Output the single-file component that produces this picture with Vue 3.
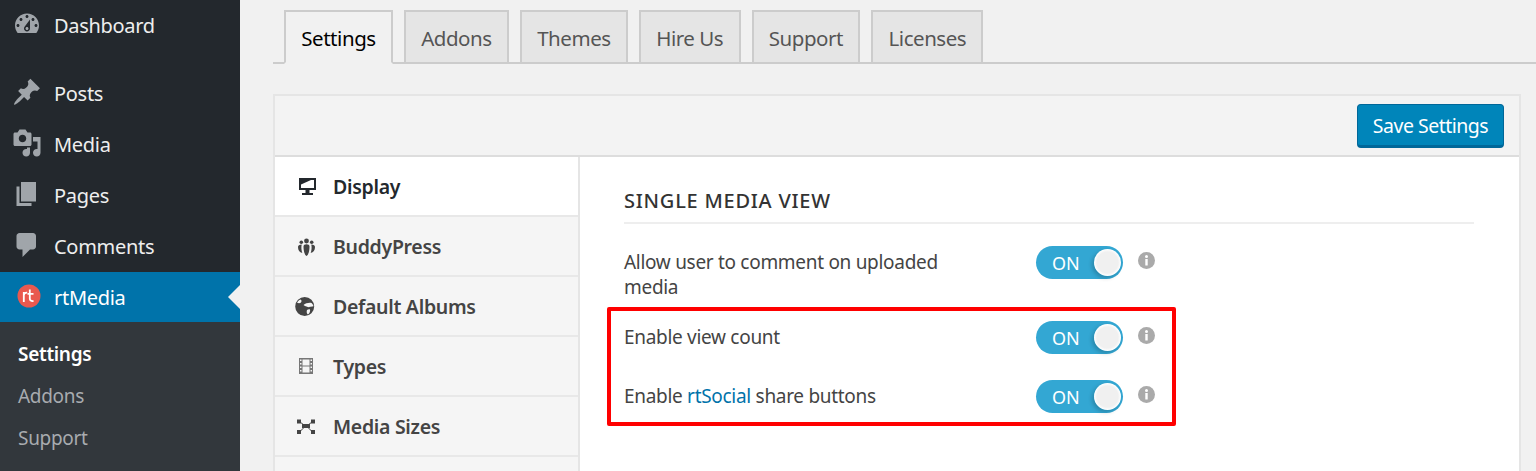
<template>
  <div class="page">
    <aside class="sidebar">
      <a class="menu-item first">
        <svg class="menu-icon" viewBox="0 0 20 20"><path fill-rule="evenodd" :d="dashboardIcon" /></svg>
        <span>Dashboard</span>
      </a>
      <a class="menu-item" v-for="item in menu" :key="item.label">
        <svg class="menu-icon" viewBox="0 0 20 20"><path fill-rule="evenodd" :d="item.icon" /></svg>
        <span>{{ item.label }}</span>
      </a>
      <a class="menu-item current">
        <svg class="rt-logo" viewBox="0 0 24 24">
          <circle cx="12" cy="12" r="11.5" fill="#e9594f" />
          <path d="M6.800 18V8M6.800 11c.4-1.800 1.700-2.600 3.400-2.400M12.800 5.500V14.500c0 2 1.300 2.800 3.700 2.500M10.500 9.800h6" fill="none" stroke="#fff" stroke-width="1.800" />
        </svg>
        <span>rtMedia</span>
      </a>
      <div class="submenu">
        <a class="sub-item active">Settings</a>
        <a class="sub-item">Addons</a>
        <a class="sub-item">Support</a>
      </div>
    </aside>

    <main class="main">
      <nav class="tabs">
        <a class="tab" v-for="(tab, i) in tabs" :key="tab" :class="{ active: i === 0 }">{{ tab }}</a>
      </nav>

      <section class="panel">
        <header class="panel-head">
          <button class="save">Save Settings</button>
        </header>
        <div class="panel-body">
          <ul class="side-nav">
            <li class="active">
              <svg viewBox="0 0 20 20">
                <path fill-rule="evenodd" d="M3 2h17v12h-6.500v3H17v2H6v-2h3.500v-3H3V2zm2 2v8h13V4H5z" />
                <path d="M5 4h10L5 8.500V4z" />
              </svg>
              Display
            </li>
            <li>
              <svg viewBox="0 0 20 20">
                <circle cx="10.500" cy="5" r="2.400" /><circle cx="5.300" cy="6.200" r="1.800" /><circle cx="15.700" cy="6.200" r="1.800" />
                <path d="M7.500 10.500c0-1.500 1.200-2.200 3-2.200s3 .7 3 2.200c0 4-1 8.500-3 9.500-2-1-3-5.500-3-9.500zM2 11c0-1.600 1.300-2.500 3.700-2.500-.6 2.500-.3 6 .6 8.500C3.500 16.500 2 14 2 11zM19 11c0-1.600-1.300-2.500-3.700-2.500.6 2.500.3 6-.6 8.500 2.800-.5 4.300-3 4.300-6z" />
              </svg>
              BuddyPress
            </li>
            <li>
              <svg class="globe" viewBox="0 0 20 20"><path fill-rule="evenodd" d="M8.700 1a9.500 9.500 0 1 0 0 19 9.500 9.500 0 0 0 0-19zM1 6.500c.8-1.300 2-2.400 3.500-3.100 1.500.7 1.200 2.500.2 3.400-1 .7-2.700.6-3.700-.3zM7.500 9c2-1.500 5-2.500 8-2 1 .8 1.700 2 2 3.200-2 .7-3.300.2-4.500 1-1.500-.5-3.500-.5-5.500-2.200zM11 14c1-.8 2.500-1 3-.4.500 1.500-.5 4-2 5-1.300-.5-1.600-3.200-1-4.600z" /></svg>
              Default Albums
            </li>
            <li>
              <svg class="film" viewBox="0 0 20 20"><path fill-rule="evenodd" d="M3 2h14v16H3V2zm1 1.500v1.500h1.500V3.500H4zm10.500 0v1.500H16V3.500h-1.500zM6.500 3.500v6h7v-6h-7zM4 7v1.500h1.500V7H4zm10.500 0v1.500H16V7h-1.500zM4 10.500V12h1.500v-1.500H4zm10.500 0V12H16v-1.500h-1.500zm-8 0v6h7v-6h-7zM4 14v1.500h1.500V14H4zm10.500 0v1.500H16V14h-1.500z" /></svg>
              Types
            </li>
            <li>
              <svg viewBox="0 0 20 20">
                <rect x="6" y="8" width="8" height="4" />
                <rect x="1" y="3.500" width="4" height="4" /><rect x="15" y="3.500" width="4" height="4" />
                <rect x="1" y="14" width="4" height="4" /><rect x="15" y="14" width="4" height="4" />
                <path d="M4 6l4 3M16 6l-4 3M4 15.500l4-4M16 15.500l-4-4" stroke="#444" stroke-width="1" fill="none" />
              </svg>
              Media Sizes
            </li>
            <li></li>
          </ul>

          <div class="content">
            <h3>SINGLE MEDIA VIEW</h3>
            <div class="row tall">
              <label>Allow user to comment on uploaded media</label>
              <span class="toggle"><em>ON</em><i></i></span>
              <svg class="info" viewBox="0 0 17 17"><circle cx="8.500" cy="8.500" r="8.500" /><circle cx="8.500" cy="4.500" r="1.500" fill="#fff" /><rect x="7.300" y="7" width="2.400" height="6.500" fill="#fff" /></svg>
            </div>
            <div class="row">
              <label>Enable view count</label>
              <span class="toggle"><em>ON</em><i></i></span>
              <svg class="info" viewBox="0 0 17 17"><circle cx="8.500" cy="8.500" r="8.500" /><circle cx="8.500" cy="4.500" r="1.500" fill="#fff" /><rect x="7.300" y="7" width="2.400" height="6.500" fill="#fff" /></svg>
            </div>
            <div class="row">
              <label>Enable <a>rtSocial</a> share buttons</label>
              <span class="toggle"><em>ON</em><i></i></span>
              <svg class="info" viewBox="0 0 17 17"><circle cx="8.500" cy="8.500" r="8.500" /><circle cx="8.500" cy="4.500" r="1.500" fill="#fff" /><rect x="7.300" y="7" width="2.400" height="6.500" fill="#fff" /></svg>
            </div>
            <div class="highlight"></div>
          </div>
        </div>
      </section>
    </main>
  </div>
</template>

<script setup>
const dashboardIcon = 'M3.760 16h12.480c1.100-1.370 1.760-3.110 1.760-5 0-4.420-3.580-8-8-8s-8 3.580-8 8c0 1.890.66 3.630 1.760 5zM10 4c.55 0 1 .45 1 1s-.45 1-1 1-1-.45-1-1 .45-1 1-1zM6 6c.55 0 1 .45 1 1s-.45 1-1 1-1-.45-1-1 .45-1 1-1zm8 0c.55 0 1 .45 1 1s-.45 1-1 1-1-.45-1-1 .45-1 1-1zm-5.370 5.550L12 7v6c0 1.100-.9 2-2 2s-2-.9-2-2c0-.57.24-1.080.63-1.450zM4 10c.55 0 1 .45 1 1s-.45 1-1 1-1-.45-1-1 .45-1 1-1zm12 0c.55 0 1 .45 1 1s-.45 1-1 1-1-.45-1-1 .45-1 1-1zm-5 3c0-.55-.45-1-1-1s-1 .45-1 1 .45 1 1 1 1-.45 1-1z'

const menu = [
  { label: 'Posts', icon: 'M10.440 3.020l1.820-1.820 6.360 6.350-1.830 1.820c-1.050-.68-2.480-.57-3.410.36l-.75.75c-.92.93-1.040 2.350-.35 3.410l-1.830 1.820-2.410-2.410-2.800 2.790c-.42.42-3.380 2.710-3.800 2.290s1.860-3.390 2.280-3.810l2.790-2.790L4.100 9.360l1.830-1.820c1.050.69 2.480.57 3.400-.36l.75-.75c.93-.92 1.050-2.350.36-3.410z' },
  { label: 'Media', icon: 'M13 11V4c0-.55-.45-1-1-1h-1.670L9 1H5L3.670 3H2c-.55 0-1 .45-1 1v7c0 .55.45 1 1 1h10c.55 0 1-.45 1-1zM7 4.500c1.380 0 2.500 1.120 2.500 2.500S8.380 9.500 7 9.500 4.500 8.380 4.500 7 5.620 4.500 7 4.500zM14 6h5v10.500c0 1.380-1.120 2.500-2.500 2.500S14 17.880 14 16.500s1.120-2.500 2.500-2.500c.17 0 .34.02.5.05V9h-3V6zm-4 8.050V13h2v3.500c0 1.380-1.120 2.500-2.500 2.500S7 17.880 7 16.500 8.120 14 9.500 14c.17 0 .34.02.5.05z' },
  { label: 'Pages', icon: 'M6 15V2h10v13H6zm-1 1h8v2H3V5h2v11z' },
  { label: 'Comments', icon: 'M5 2h9c1.100 0 2 .9 2 2v7c0 1.100-.9 2-2 2h-2l-5 5v-5H5c-1.100 0-2-.9-2-2V4c0-1.100.9-2 2-2z' }
]

const tabs = ['Settings', 'Addons', 'Themes', 'Hire Us', 'Support', 'Licenses']
</script>

<style>
html, body {
  margin: 0;
  background: #f1f1f1;
}
</style>

<style scoped>
.page {
  display: flex;
  height: 471px;
  overflow: hidden;
  font-family: "Noto Sans", "Open Sans", sans-serif;
  font-size: 19px;
  color: #444;
  background: #f1f1f1;
}

/* sidebar */
.sidebar {
  width: 240px;
  flex-shrink: 0;
  background: #23282d;
  display: flex;
  flex-direction: column;
}

.menu-item {
  height: 51px;
  flex-shrink: 0;
  display: flex;
  align-items: center;
  position: relative;
  color: #eee;
  font-size: 20px;
  letter-spacing: -0.3px;
  padding-left: 12px;
}

.menu-item.first {
  margin-bottom: 17px;
}

.menu-icon {
  width: 30px;
  height: 30px;
  margin: -3px 12px 0 0;
  fill: #a0a5aa;
}

.menu-item.current {
  height: 50px;
  background: #0073aa;
  color: #fff;
}

.menu-item.current::after {
  content: "";
  position: absolute;
  right: 0;
  top: 13px;
  border: 12px solid transparent;
  border-right-color: #f1f1f1;
  border-left: 0;
}

.rt-logo {
  width: 24px;
  height: 24px;
  margin: -2px 13px 0 5px;
}

.submenu {
  flex: 1;
  background: #32373c;
  padding: 11px 0 0 18px;
}

.sub-item {
  display: block;
  height: 42px;
  line-height: 42px;
  font-size: 19px;
  letter-spacing: -0.3px;
  color: #a8abaf;
}

.sub-item.active {
  color: #fff;
  font-weight: 600;
}

/* main */
.main {
  flex: 1;
  padding: 10px 15px 0 33px;
  min-width: 0;
}

.tabs {
  display: flex;
  gap: 11px;
  height: 54px;
  box-sizing: border-box;
  border-bottom: 2px solid #ccc;
  margin-right: -15px;
  padding-left: 11px;
}

.tab {
  height: 54px;
  box-sizing: border-box;
  padding: 2px 15.250px 0;
  display: flex;
  align-items: center;
  border: 2px solid #ccc;
  background: #e5e5e5;
  color: #555;
  font-size: 20.500px;
  letter-spacing: -0.45px;
}

.tab.active {
  background: #f1f1f1;
  border-bottom-color: #f1f1f1;
  color: #000;
}

.panel {
  margin-top: 30px;
  border: 2px solid #e5e5e5;
  background: #fff;
  height: 400px;
}

.panel-head {
  height: 61px;
  box-sizing: border-box;
  background: #f3f3f3;
  border-bottom: 2px solid #ddd;
  display: flex;
  justify-content: flex-end;
  align-items: flex-start;
  padding: 8px 15px 0 0;
}

.save {
  width: 147px;
  height: 44px;
  border: 1px solid #006799;
  border-bottom-width: 3px;
  border-radius: 4px;
  background: #0085ba;
  color: #fff;
  font: inherit;
  font-size: 19.500px;
  letter-spacing: -0.5px;
  padding: 0;
}

.panel-body {
  display: flex;
}

.side-nav {
  width: 303px;
  flex-shrink: 0;
  margin: 0;
  padding: 0;
  list-style: none;
  border-right: 2px solid #e5e5e5;
}

.side-nav li {
  height: 58px;
  border-bottom: 2px solid #e8e8e8;
  background: #f5f5f5;
  display: flex;
  align-items: center;
  font-weight: 600;
  font-size: 19.500px;
  letter-spacing: -0.3px;
  color: #444;
}

.side-nav li.active {
  background: #fff;
  color: #23282d;
}

.side-nav svg {
  width: 20px;
  height: 20px;
  margin: 0 17px 0 21px;
  fill: #444;
  overflow: visible;
}

.side-nav li.active svg {
  fill: #23282d;
}

.side-nav svg.film {
  fill: #777;
}

.content {
  flex: 1;
  position: relative;
  padding: 29px 45px 0 44px;
}

.content h3 {
  margin: 0 0 22px;
  height: 36px;
  line-height: 30px;
  border-bottom: 2px solid #eee;
  font-size: 20px;
  font-weight: 500;
  letter-spacing: 0.75px;
  color: #333;
}

.row {
  display: flex;
  align-items: center;
  margin-bottom: 26px;
}

.row.tall {
  align-items: flex-start;
  margin-bottom: 21px;
}

.row label {
  width: 412px;
  flex-shrink: 0;
  line-height: 25px;
  box-sizing: border-box;
  padding-right: 90px;
  letter-spacing: -0.3px;
}

.row.tall label {
  padding-top: 4px;
}

.row a {
  color: #0073aa;
}

.toggle {
  width: 87px;
  height: 33px;
  flex-shrink: 0;
  border-radius: 17px;
  background: #33a7d3;
  position: relative;
  display: block;
}

.toggle em {
  position: absolute;
  left: 16px;
  top: 0;
  line-height: 34px;
  font-style: normal;
  font-size: 18px;
  color: #fff;
}

.toggle i {
  position: absolute;
  right: 2px;
  top: 3px;
  width: 27px;
  height: 27px;
  border-radius: 50%;
  background: radial-gradient(circle, #f0f0f0 55%, #fff 70%);
  box-shadow: -2px 2px 4px rgba(0, 0, 0, 0.2);
}

.info {
  width: 17px;
  height: 17px;
  margin: 6px 0 0 15px;
  fill: #aaa;
  align-self: flex-start;
}

.highlight {
  position: absolute;
  left: 27px;
  top: 150px;
  width: 561px;
  height: 111px;
  border: 4px solid #f00;
  border-radius: 2px;
}
</style>
